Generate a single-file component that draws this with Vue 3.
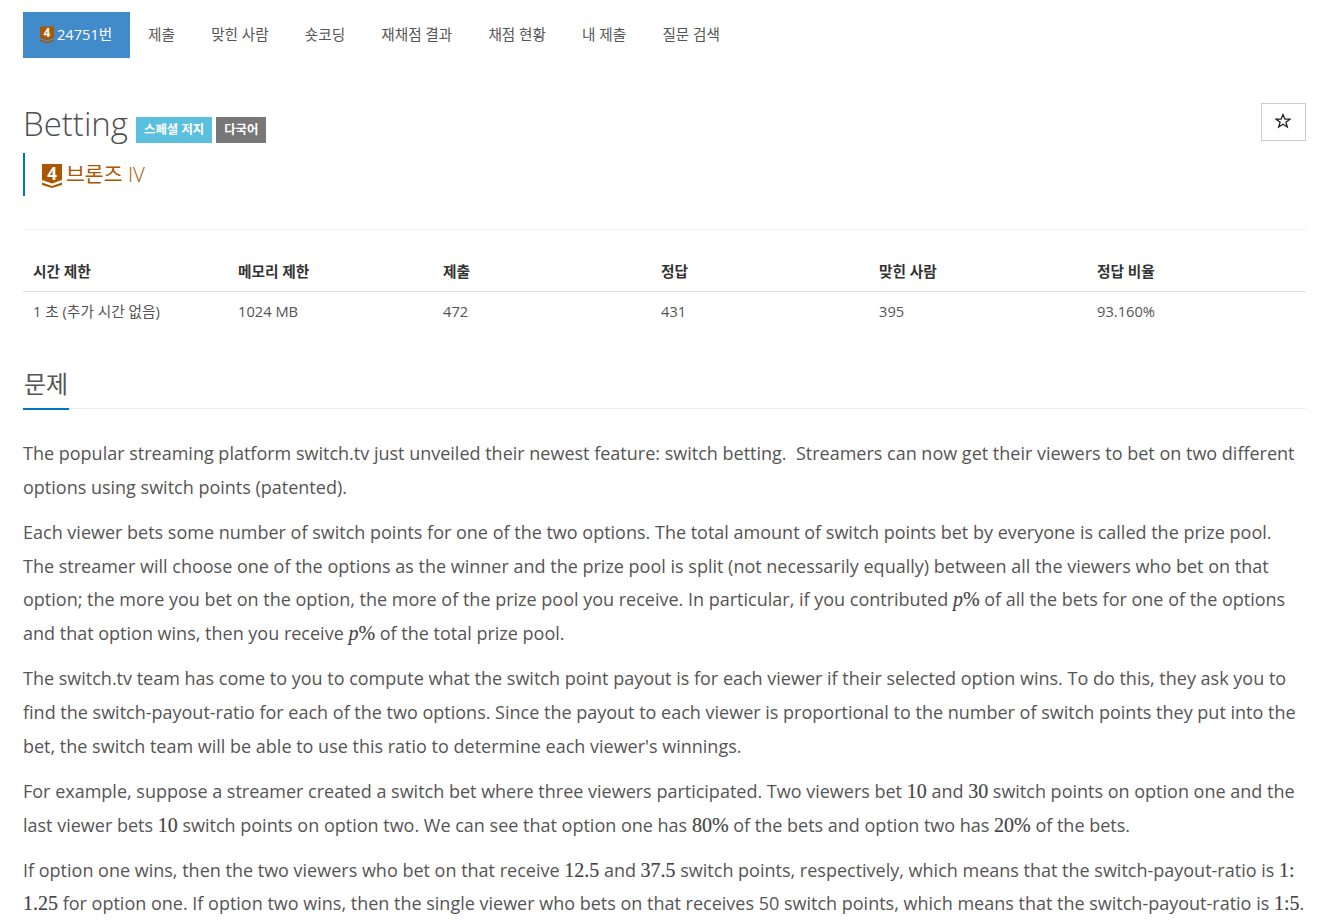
<template>
  <div class="page">
    <nav class="tabs">
      <a v-for="(tab, i) in tabs" :key="tab" class="tab" :class="{ active: i === 0 }">
        <svg v-if="i === 0" class="tier tier-small" viewBox="0 0 20 24"><path d="M0 0H20V16L10 19.500L0 16Z" fill="#ad5600" /><path d="M0 18.500L10 22L20 18.500V21L10 24L0 21Z" fill="#ad5600" /><text x="10" y="15.500" text-anchor="middle" class="tier-num">4</text></svg>
        {{ tab }}
      </a>
    </nav>

    <div class="title-row">
      <h1 class="title">
        <span>Betting</span>
        <span class="label info">스페셜 저지</span>
        <span class="label gray">다국어</span>
      </h1>
      <button class="star" type="button">
        <svg viewBox="0 0 16 16" width="16" height="16"><path d="M8 1.500L9.900 6.200H14.900L10.900 9.200L12.300 14L8 11.200L3.700 14L5.100 9.200L1.100 6.200H6.100Z" fill="none" stroke="#222" stroke-width="1.300" /></svg>
      </button>
    </div>

    <blockquote class="tier-box">
      <svg class="tier tier-big" viewBox="0 0 20 24"><path d="M0 0H20V16L10 19.500L0 16Z" fill="#ad5600" /><path d="M0 18.500L10 22L20 18.500V21L10 24L0 21Z" fill="#ad5600" /><text x="10" y="15.500" text-anchor="middle" class="tier-num">4</text></svg>
      <span class="tier-name">브론즈 <span class="tier-level">IV</span></span>
    </blockquote>

    <table class="info-table">
      <colgroup>
        <col v-for="w in colWidths" :key="w.id" :style="{ width: w.px + 'px' }" />
      </colgroup>
      <thead>
        <tr><th v-for="h in headers" :key="h">{{ h }}</th></tr>
      </thead>
      <tbody>
        <tr><td v-for="v in values" :key="v">{{ v }}</td></tr>
      </tbody>
    </table>

    <section>
      <div class="headline"><h2>문제</h2></div>
      <div class="problem">
        <p>The popular streaming platform switch.tv just unveiled their newest feature: switch betting.&nbsp; Streamers can now get their viewers to bet on two different options using switch points (patented).</p>
        <p>Each viewer bets some number of switch points for one of the two options. The total amount of switch points bet by everyone is called the prize pool. The streamer will choose one of the options as the winner and the prize pool is split (not necessarily equally) between all the viewers who bet on that option; the more you bet on the option, the more of the prize pool you receive. In particular, if you contributed <span class="math"><i>p</i>%</span> of all the bets for one of the options and that option wins, then you receive <span class="math"><i>p</i>%</span> of the total prize pool.</p>
        <p>The switch.tv team has come to you to compute what the switch point payout is for each viewer if their selected option wins. To do this, they ask you to find the switch-payout-ratio for each of the two options. Since the payout to each viewer is proportional to the number of switch points they put into the bet, the switch team will be able to use this ratio to determine each viewer's winnings.</p>
        <p>For example, suppose a streamer created a switch bet where three viewers participated. Two viewers bet <span class="math">10</span> and <span class="math">30</span> switch points on option one and the last viewer bets <span class="math">10</span> switch points on option two. We can see that option one has <span class="math">80%</span> of the bets and option two has <span class="math">20%</span> of the bets.</p>
        <p>If option one wins, then the two viewers who bet on that receive <span class="math">12.5</span> and <span class="math">37.5</span> switch points, respectively, which means that the switch-payout-ratio is <span class="math">1:</span> <span class="math">1.25</span> for option one. If option two wins, then the single viewer who bets on that receives 50 switch points, which means that the switch-payout-ratio is <span class="math">1:5</span>.</p>
      </div>
    </section>
  </div>
</template>

<script setup>
const tabs = ['24751번', '제출', '맞힌 사람', '숏코딩', '재채점 결과', '채점 현황', '내 제출', '질문 검색']
const headers = ['시간 제한', '메모리 제한', '제출', '정답', '맞힌 사람', '정답 비율']
const values = ['1 초 (추가 시간 없음)', '1024 MB', '472', '431', '395', '93.160%']
const colWidths = [205, 205, 218, 218, 218, 219].map((px, id) => ({ id, px }))
</script>

<style>
html, body {
  background: #fff;
}
</style>

<style scoped>
.page {
  box-sizing: border-box;
  width: 1342px;
  height: 924px;
  overflow: hidden;
  padding: 12px 36px 0 23px;
  font-family: "Open Sans", "Noto Sans CJK KR", sans-serif;
  color: #555;
}

.tabs {
  display: flex;
  height: 46px;
}

.tab {
  display: flex;
  align-items: center;
  gap: 3px;
  padding: 0 18.100px 3px;
  font-size: 14.600px;
  color: #555;
}

.tab.active {
  background: #428bca;
  color: #fff;
  width: 107px;
  box-sizing: border-box;
  padding: 0 0 3px 17px;
}

.tier {
  display: block;
  flex: none;
  overflow: visible;
}

.tier-small {
  width: 14px;
  height: 18px;
  margin-top: 3px;
}

.tier-big {
  width: 20px;
  height: 24px;
  margin-top: 3px;
}

.tier-num {
  font-family: "Open Sans", sans-serif;
  font-size: 17px;
  font-weight: 700;
  fill: #fff;
}

.title-row {
  display: flex;
  justify-content: space-between;
  align-items: flex-start;
  margin-top: 45px;
  height: 50px;
}

.title {
  display: flex;
  align-items: center;
  gap: 4px;
  margin: -1px 0 0;
  font-size: 33px;
  font-weight: 300;
  line-height: 44px;
  color: #4f4f4f;
}

.title > span:first-child {
  margin-right: 4px;
}

.label {
  margin-top: 12px;
  height: 26px;
  padding: 0 8px;
  display: flex;
  align-items: center;
  font-size: 12.400px;
  font-weight: 700;
  color: #fff;
}

.info {
  background: #5bc0de;
}

.gray {
  background: #777;
}

.star {
  box-sizing: border-box;
  width: 45px;
  height: 38px;
  display: flex;
  align-items: center;
  justify-content: center;
  background: #fff;
  border: 1px solid #ccc;
  padding: 0 2px 2px 0;
}

.tier-box {
  display: flex;
  align-items: center;
  gap: 4px;
  box-sizing: border-box;
  height: 43px;
  margin: 0;
  padding: 0 0 0 17px;
  border-left: 2px solid #0076c0;
  color: #ad5600;
  font-size: 20.500px;
  font-weight: 400;
}

.tier-name {
  margin-top: -4px;
}

.tier-level {
  font-weight: 300;
}

.info-table {
  margin-top: 33px;
  border-top: 1px solid #eee;
  width: 1283px;
  table-layout: fixed;
  border-collapse: collapse;
  font-size: 14.700px;
  color: #333;
}

.info-table thead tr:first-child th {
  padding-top: 30px;
}

.info-table th {
  text-align: left;
  padding: 10px;
  height: 20px;
  font-weight: 700;
  color: #333;
  border-bottom: 1px solid #ddd;
}

.info-table td {
  padding: 8px 10px 11px;
  height: 20px;
  color: #555;
}

.headline {
  margin-top: 31px;
  border-bottom: 1px dotted #ddd;
  height: 45px;
}

.headline h2 {
  display: inline-block;
  box-sizing: border-box;
  height: 47px;
  margin: 0;
  padding: 4px 1px 0;
  font-size: 24px;
  font-weight: 400;
  line-height: 34px;
  color: #555;
  border-bottom: 2px solid #0076c0;
}

.problem {
  margin-top: 28px;
  font-size: 18px;
  line-height: 33.700px;
  color: #555;
}

.problem p {
  margin: 0 0 11.500px;
}

.math {
  font-family: "Liberation Serif", serif;
  font-size: 20px;
  font-weight: 400;
  color: #444;
  -webkit-text-stroke: 0.150px #444;
}
</style>
